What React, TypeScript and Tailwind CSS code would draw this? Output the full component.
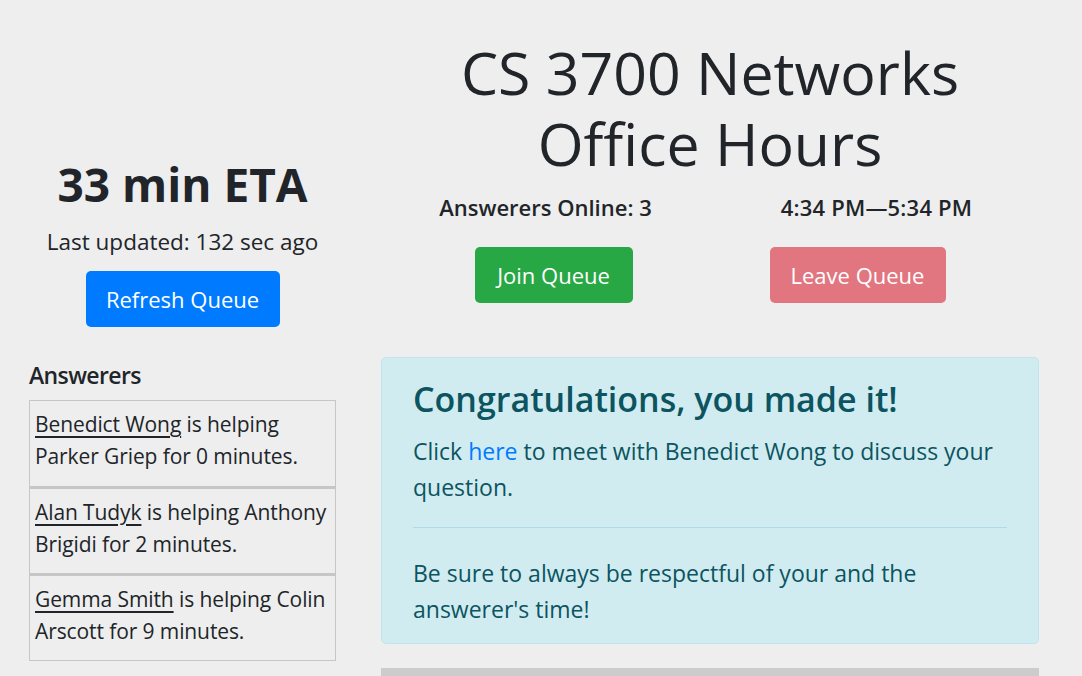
const answerers = [
  { name: "Benedict Wong", rest: " is helping Parker Griep for 0 minutes." },
  { name: "Alan Tudyk", rest: " is helping Anthony Brigidi for 2 minutes." },
  { name: "Gemma Smith", rest: " is helping Colin Arscott for 9 minutes." },
];

export default function App() {
  return (
    <div
      className="h-[676px] w-[1082px] overflow-hidden bg-[#eeeeee] text-[#212529]"
      style={{ fontFamily: '"Open Sans", "Noto Sans", sans-serif' }}
    >
      <div className="flex pl-[14px]">
        {/* Left column */}
        <div className="w-[337px] shrink-0 px-[15px]">
          <div className="flex flex-col items-center pt-[152px]">
            <h2 className="text-[46px] leading-[64px] font-bold">33 min ETA</h2>
            <p className="mt-[9px] text-[22.5px] leading-[34px]">Last updated: 132 sec ago</p>
            <button className="mt-[12px] h-[56px] w-[194px] rounded-[5px] bg-[#007bff] text-[22px] text-white">
              Refresh Queue
            </button>
          </div>
          <h4 className="mt-[33px] text-[23px] leading-[30px] font-semibold tracking-[-0.6px]">Answerers</h4>
          <ul className="mt-[10px] w-[307px]">
            {answerers.map((a, i) => (
              <li
                key={a.name}
                className={`h-[87px] border border-[#c6c6c6] pt-[7px] pl-[5px] text-[21px] leading-[32px] tracking-[-0.1px] ${i > 0 ? "border-t-2" : ""}`}
              >
                <a className="underline decoration-[1.5px] underline-offset-[4px]">{a.name}</a>
                <span>{a.rest}</span>
              </li>
            ))}
          </ul>
        </div>

        {/* Right column */}
        <div className="ml-[15px] w-[688px] shrink-0 px-[15px]">
          <h1 className="pt-[37px] text-center text-[59px] leading-[71px] font-medium">
            CS 3700 Networks
            <br />
            Office Hours
          </h1>
          <div className="mt-[12px] grid grid-cols-2 text-[22px] leading-[32px] font-semibold">
            <div className="text-center">Answerers Online: 3</div>
            <div className="pl-[4px] text-center tracking-[0.2px]">4:34 PM—5:34 PM</div>
          </div>
          <div className="mt-[24px] grid grid-cols-2">
            <div className="flex justify-center pl-[16px]">
              <button className="h-[56px] w-[158px] rounded-[5px] bg-[#28a745] text-[22px] text-white">
                Join Queue
              </button>
            </div>
            <div className="flex justify-center pr-[34px]">
              <button className="h-[56px] w-[176px] rounded-[5px] bg-[#e27680] text-[22px] text-white">
                Leave Queue
              </button>
            </div>
          </div>

          <div className="mt-[54px] rounded-[5px] border border-[#bee5eb] bg-[#d1ecf1] px-[31px] pt-[21px] pb-[16px] text-[#0c5460]">
            <h4 className="text-[34px] leading-[40px] font-semibold">Congratulations, you made it!</h4>
            <p className="mt-[14px] text-[23px] leading-[36px]">
              Click <a className="text-[#007bff]">here</a> to meet with Benedict Wong to discuss your question.
            </p>
            <hr className="mt-[22px] border-t border-[#abdde5]" />
            <p className="mt-[27px] text-[23px] leading-[36px]">
              Be sure to always be respectful of your and the answerer's time!
            </p>
          </div>
          <div className="mt-[24px] h-[10px] bg-[#cccccc]" />
        </div>
      </div>
    </div>
  );
}
